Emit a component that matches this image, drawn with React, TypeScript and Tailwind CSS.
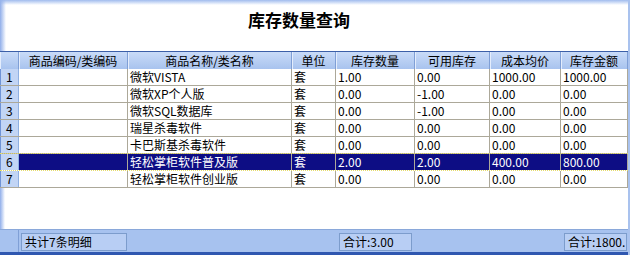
const cols = [
  { title: "", w: "w-[19px]" },
  { title: "商品编码/类编码", w: "w-[109px]" },
  { title: "商品名称/类名称", w: "w-[164px]" },
  { title: "单位", w: "w-[44px]" },
  { title: "库存数量", w: "w-[79px]" },
  { title: "可用库存", w: "w-[75px]" },
  { title: "成本均价", w: "w-[71px]" },
  { title: "库存金额", w: "w-[67px]" },
];

const rows = [
  ["", "微软VISTA", "套", "1.00", "0.00", "1000.00", "1000.00"],
  ["", "微软XP个人版", "套", "0.00", "-1.00", "0.00", "0.00"],
  ["", "微软SQL数据库", "套", "0.00", "-1.00", "0.00", "0.00"],
  ["", "瑞星杀毒软件", "套", "0.00", "0.00", "0.00", "0.00"],
  ["", "卡巴斯基杀毒软件", "套", "0.00", "0.00", "0.00", "0.00"],
  ["", "轻松掌柜软件普及版", "套", "2.00", "2.00", "400.00", "800.00"],
  ["", "轻松掌柜软件创业版", "套", "0.00", "0.00", "0.00", "0.00"],
];

const SELECTED = 5;

export default function App() {
  return (
    <div className="w-[630px] h-[255px] overflow-hidden bg-white flex flex-col border-r-2 border-[#a9c2ee] font-['Noto_Sans_CJK_SC','Noto_Sans',sans-serif] text-[12px] text-black">
      {/* title */}
      <div className="h-[51px] shrink-0 pl-[248px] pt-[9px] bg-[linear-gradient(to_bottom,rgba(150,180,236,0.9),rgba(255,255,255,0)_5px),linear-gradient(to_right,#90aeea,rgba(255,255,255,0)_6px)]">
        <h1 className="text-[17px] font-bold leading-[22px]">库存数量查询</h1>
      </div>

      {/* header */}
      <div className="flex h-[18px] shrink-0 border-t border-[#3c5fa8] bg-[linear-gradient(to_bottom,#c9dbf8,#a8c3ee)]">
        {cols.map((c, i) => (
          <div
            key={i}
            className={`${c.w} h-full border-r border-[#7f9fd6] shadow-[inset_1px_0_0_#e4edfc] flex items-center justify-center leading-none`}
          >
            {c.title}
          </div>
        ))}
      </div>

      {/* rows */}
      <div className="flex flex-col">
        {rows.map((r, ri) => {
          const sel = ri === SELECTED;
          return (
            <div
              key={ri}
              className={
                sel
                  ? "flex h-[18px] -mt-px border-y border-dotted border-[#e6dc6a]"
                  : "flex h-[17px] border-b border-[#aca899]"
              }
            >
              <div className="w-[19px] h-full bg-[#c2d5f5] border-r border-[#8fb0e2] shadow-[inset_1px_0_0_#6f93d6] pl-[6px] flex items-center leading-none">
                {ri + 1}
              </div>
              {r.map((v, ci) => (
                <div
                  key={ci}
                  className={`${cols[ci + 1].w} h-full border-r border-[#aca899] pl-[2px] flex items-center leading-none whitespace-nowrap overflow-hidden ${
                    sel ? "bg-[#0d0d84] text-white" : ""
                  }`}
                >
                  {v}
                </div>
              ))}
            </div>
          );
        })}
      </div>

      {/* empty area */}
      <div className="flex-1 bg-[linear-gradient(to_right,#90aeea,rgba(255,255,255,0)_5px)]" />

      {/* footer */}
      <div className="h-[26px] shrink-0 flex border-t border-[#8aa8da] border-b-[3px] border-b-[#2f57b0] bg-[#a7c2ef]">
        <div className="w-[19px] h-full border-r border-[#7f9fd6]" />
        <div className="w-[317px] pl-[2px] pt-[3px]">
          <div className="w-[106px] h-[18px] border border-[#7c9ccc] bg-[#b8cef4] pl-[3px] flex items-center leading-none">
            共计7条明细
          </div>
        </div>
        <div className="w-[225px] pl-[3px] pt-[3px]">
          <div className="w-[73px] h-[18px] border border-[#7c9ccc] bg-[#b8cef4] pl-[3px] flex items-center leading-none">
            合计:3.00
          </div>
        </div>
        <div className="w-[67px] pl-[3px] pt-[3px]">
          <div className="w-[63px] h-[18px] border border-[#7c9ccc] bg-[#b8cef4] pl-[3px] flex items-center leading-none overflow-hidden whitespace-nowrap">
            合计:1800.
          </div>
        </div>
      </div>
    </div>
  );
}
